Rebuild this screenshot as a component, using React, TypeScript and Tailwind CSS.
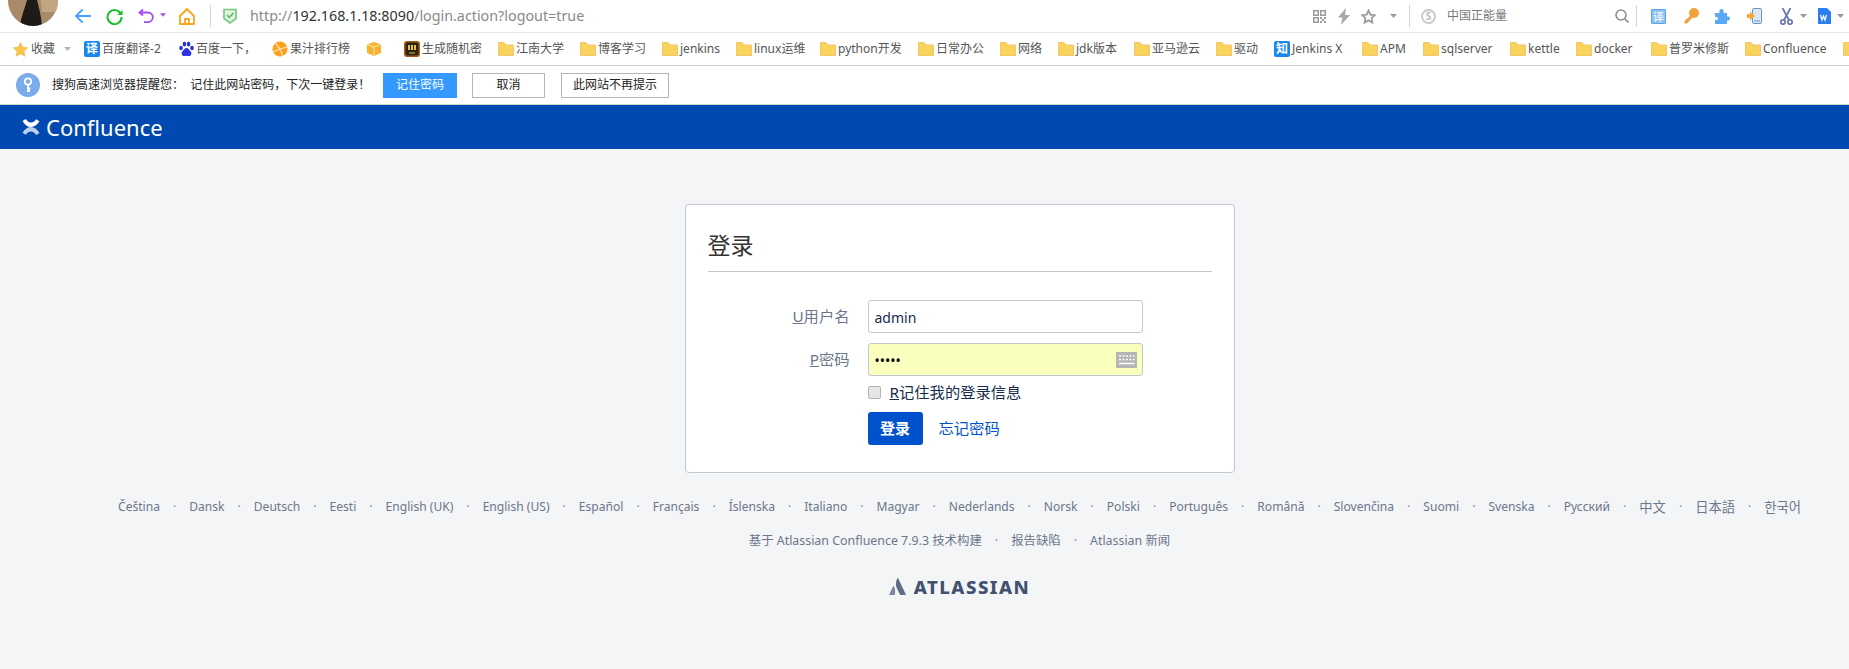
import React from "react";

const CJK = "font-['Noto_Sans','Noto_Sans_CJK_SC',sans-serif]";

function Folder() {
  return (
    <svg width="16" height="14" viewBox="0 0 16 14" className="shrink-0">
      <path d="M.5 13.5V.5h5.5l2 2.5h7.500v10.500z" fill="#f9d45c" stroke="#f6c46a" />
    </svg>
  );
}
function Star() {
  return (
    <svg width="15" height="15" viewBox="0 0 24 24" className="shrink-0">
      <path d="M12 1l3.400 7.300 7.900 1-5.800 5.500 1.500 8L12 18.800 5 22.800l1.500-8L.7 9.300l7.900-1z" fill="#f7c548" stroke="#eeb23a" strokeWidth="1" />
    </svg>
  );
}
function Badge({ ch }: { ch: string }) {
  return (
    <span className="w-4 h-4 shrink-0 rounded-[2px] bg-[#1a86f0] text-white text-[12px] leading-4 text-center font-bold">{ch}</span>
  );
}
function Paw() {
  return (
    <svg width="15" height="16" viewBox="0 0 15 16" className="shrink-0" fill="#2932e1">
      <ellipse cx="2" cy="7" rx="1.800" ry="2.300" />
      <ellipse cx="5.400" cy="3" rx="1.800" ry="2.500" />
      <ellipse cx="9.600" cy="3" rx="1.800" ry="2.500" />
      <ellipse cx="13" cy="7" rx="1.800" ry="2.300" />
      <path d="M7.500 7C5.500 7 5 9 3.500 10.200 2 11.500 2.500 15 5 15c1 0 1.500-.3 2.500-.3S9 15 10 15c2.500 0 3-3.500 1.500-4.800C10 9 9.500 7 7.500 7z" />
    </svg>
  );
}
function Orange() {
  return (
    <svg width="16" height="16" viewBox="0 0 16 16" className="shrink-0">
      <circle cx="8" cy="8" r="7.500" fill="#ffa21a" />
      <path d="M8 8L3 1.500M8 8l7 -2M8 8L1 11M8 8l3 7" stroke="#ffe3bd" strokeWidth="1.300" />
    </svg>
  );
}
function Box() {
  return (
    <svg width="14" height="14" viewBox="0 0 14 14" className="shrink-0">
      <path d="M7 0l7 2.500V11l-7 3-7-3V2.500z" fill="#f5b330" />
      <path d="M0 2.500L7 5l7-2.500M7 5v9" stroke="#fde3ae" strokeWidth="1" fill="none" />
    </svg>
  );
}
function Vault() {
  return (
    <svg width="16" height="16" viewBox="0 0 16 16" className="shrink-0">
      <rect width="16" height="16" rx="3" fill="#a8591a" />
      <rect x="1.500" y="1.500" width="13" height="13" rx="2" fill="#2b2410" />
      <path d="M4 4h2v5H4zM7 4h2v5H7zM10 4h2v5h-2zM5 11.500h6v1H5z" fill="#e4c04a" />
    </svg>
  );
}

type BM = { t: string; i: React.ReactNode; w: string };
const bookmarks: BM[] = [
  { t: "百度翻译-2", i: <Badge ch="译" />, w: "w-[95px]" },
  { t: "百度一下，", i: <Paw />, w: "w-[93px]" },
  { t: "果汁排行榜", i: <Orange />, w: "w-[95px]" },
  { t: "", i: <Box />, w: "w-[37px]" },
  { t: "生成随机密", i: <Vault />, w: "w-[94px]" },
  { t: "江南大学", i: <Folder />, w: "w-[82px]" },
  { t: "博客学习", i: <Folder />, w: "w-[82px]" },
  { t: "jenkins", i: <Folder />, w: "w-[74px]" },
  { t: "linux运维", i: <Folder />, w: "w-[84px]" },
  { t: "python开发", i: <Folder />, w: "w-[98px]" },
  { t: "日常办公", i: <Folder />, w: "w-[82px]" },
  { t: "网络", i: <Folder />, w: "w-[58px]" },
  { t: "jdk版本", i: <Folder />, w: "w-[76px]" },
  { t: "亚马逊云", i: <Folder />, w: "w-[82px]" },
  { t: "驱动", i: <Folder />, w: "w-[58px]" },
  { t: "Jenkins X", i: <Badge ch="知" />, w: "w-[88px]" },
  { t: "APM", i: <Folder />, w: "w-[61px]" },
  { t: "sqlserver", i: <Folder />, w: "w-[87px]" },
  { t: "kettle", i: <Folder />, w: "w-[66px]" },
  { t: "docker", i: <Folder />, w: "w-[75px]" },
  { t: "普罗米修斯", i: <Folder />, w: "w-[94px]" },
  { t: "Confluence", i: <Folder />, w: "w-[98px]" },
  { t: "", i: <Folder />, w: "w-[16px]" },
];

const langs = ["Čeština","Dansk","Deutsch","Eesti","English (UK)","English (US)","Español","Français","Íslenska","Italiano","Magyar","Nederlands","Norsk","Polski","Português","Română","Slovenčina","Suomi","Svenska","Русский","中文","日本語","한국어"];
const wideLangs = ["中文", "日本語", "한국어"];
const links = ["基于 Atlassian Confluence 7.9.3 技术构建","报告缺陷","Atlassian 新闻"];

function Caret({ c = "#9a9a9a", w = 7 }: { c?: string; w?: number }) {
  return (
    <svg width={w} height="4" viewBox="0 0 7 4" className="shrink-0"><path d="M0 0h7L3.500 4z" fill={c} /></svg>
  );
}

function Dots({ items, size }: { items: string[]; size: string }) {
  return (
    <ul className={`flex justify-center items-center gap-[13px] leading-5 text-[#6b778c] ${size}`}>
      {items.map((t, i) => (
        <React.Fragment key={t}>
          {i > 0 && <li className="text-[#7a869a]">·</li>}
          <li className={wideLangs.includes(t) ? "text-[13.3px]" : ""}>{t}</li>
        </React.Fragment>
      ))}
    </ul>
  );
}

export default function App() {
  return (
    <div className={`w-[1849px] h-[669px] overflow-hidden bg-[#f4f5f7] ${CJK}`}>
      {/* browser toolbar */}
      <div className="h-[33px] bg-white border-b border-[#e6e6e6] flex items-center justify-between overflow-hidden">
        <div className="flex items-center">
          <svg width="50" height="50" viewBox="0 0 50 50" className="ml-2 mt-[-30px] shrink-0 rounded-full">
            <rect width="50" height="50" fill="#a88a68" />
            <path d="M30 0h20v36H34z" fill="#c2a684" />
            <path d="M20 20h8c2 8 5 18 6 30H12c1-10 6-20 8-30z" fill="#1e1a18" />
          </svg>
          <svg width="18" height="16" viewBox="0 0 18 16" className="ml-[16px] shrink-0" fill="none" stroke="#4a9ffa" strokeWidth="1.800">
            <path d="M17 8H2M8.500 1.500L2 8l6.500 6.500" />
          </svg>
          <svg width="17" height="17" viewBox="0 0 17 17" className="ml-[14px] shrink-0" fill="none" stroke="#17bf2c" strokeWidth="2">
            <path d="M14.500 5.500A7 7 0 1 0 15.500 9" />
            <path d="M16.500 2v5h-5z" fill="#17bf2c" stroke="none" />
          </svg>
          <svg width="17" height="16" viewBox="0 0 17 16" className="ml-[15px] shrink-0" fill="none" stroke="#a54bf0" strokeWidth="1.800">
            <path d="M5 1.500L1.500 4.500 5 7.500M2 4.500h8a4.800 4.800 0 0 1 0 9.600H6" />
          </svg>
          <span className="ml-[5px] mb-[2px]"><Caret c="#a54bf0" w={6} /></span>
          <svg width="16" height="17" viewBox="0 0 16 17" className="ml-[13px] shrink-0" fill="none" stroke="#ffa31a" strokeWidth="1.800" strokeLinejoin="round">
            <path d="M8 1L1 8v8h14V8zM6 16v-5h4v5" />
          </svg>
          <span className="ml-[15px] w-px h-[22px] bg-[#d4d4d4]" />
          <svg width="14" height="16" viewBox="0 0 14 16" className="ml-[12px] shrink-0" fill="none">
            <path d="M1 1.500h12v9l-6 4.500-6-4.500z" fill="#dff3e1" stroke="#74c87f" strokeWidth="1.600" />
            <path d="M4 7l2.300 2.300L10.500 5" stroke="#59b868" strokeWidth="1.600" />
          </svg>
          <span className="ml-[13px] text-[14.3px] text-[#8a8a8a] whitespace-nowrap">http://<span className="text-[#333]">192.168.1.18:8090</span>/login.action?logout=true</span>
        </div>
        <div className="flex items-center w-[536px] shrink-0">
          <svg width="13" height="13" viewBox="0 0 13 13" className="shrink-0" fill="#9b9b9b">
            <path d="M0 0h6v6H0zM1.500 1.500v3h3v-3zM7 0h6v6H7zM8.500 1.500v3h3v-3zM0 7h6v6H0zM1.500 8.500v3h3v-3zM7 7h2v2H7zM11 7h2v2h-2zM9 9h2v2H9zM7 11h2v2H7zM11 11h2v2h-2z" fillRule="evenodd" />
          </svg>
          <svg width="12" height="17" viewBox="0 0 12 17" className="ml-3 shrink-0" fill="#a6a6a6"><path d="M8 0L0 9.500h4.500L3 17l9-10H7z" /></svg>
          <svg width="15" height="15" viewBox="0 0 24 24" className="ml-[11px] shrink-0" fill="none" stroke="#9b9b9b" strokeWidth="2.800"><path d="M12 2.500l3 6.500 7 .9-5.100 4.800 1.300 7L12 18.200l-6.200 3.500 1.300-7L2 9.900 9 9z" /></svg>
          <span className="ml-[14px]"><Caret /></span>
          <span className="ml-[12px] w-px h-[22px] bg-[#d4d4d4]" />
          <span className="ml-[11px] w-[15px] h-[15px] rounded-full border-2 border-[#c9c9c9] text-[#bdbdbd] text-[10px] leading-[11px] text-center font-bold shrink-0">S</span>
          <span className="ml-[11px] w-[168px] text-[12px] text-[#777] whitespace-nowrap">中国正能量</span>
          <svg width="14" height="14" viewBox="0 0 14 14" className="shrink-0" fill="none" stroke="#8e8e8e" strokeWidth="1.600"><circle cx="6" cy="6" r="5" /><path d="M9.500 9.500L13.500 13.500" /></svg>
          <span className="ml-[7px] w-px h-[22px] bg-[#d4d4d4]" />
          <span className="ml-[14px] w-[15px] h-[15px] rounded-[1px] bg-[#8fc3f2] border border-[#5ea3e6] text-white text-[11px] leading-[13px] text-center shrink-0">译</span>
          <svg width="15" height="16" viewBox="0 0 15 16" className="ml-[18px] shrink-0" fill="#f0a23c"><circle cx="10" cy="5" r="5" /><path d="M7 7l2 2-6 6.500H.5V13z" /></svg>
          <svg width="15" height="15" viewBox="0 0 15 15" className="ml-[16px] shrink-0" fill="#5aa9f5"><path d="M0 4h4.500C4 1 5 0 6.500 0S9 1 8.500 4H12v3.500c2.500-.5 3 1 3 2s-.5 2.500-3 2V15H0v-4c2 .5 3-.5 3-1.500S2 7.500 0 8z" /></svg>
          <svg width="15" height="16" viewBox="0 0 15 16" className="ml-[17px] shrink-0">
            <rect x="5.500" y=".5" width="9" height="15" rx="1.500" fill="#dce8f6" stroke="#6f93c4" />
            <path d="M7 13h6" stroke="#6f93c4" />
            <path d="M0 6h3V3.500L8 8l-5 4.500V10H0z" fill="#f5a93a" />
          </svg>
          <svg width="13" height="17" viewBox="0 0 13 17" className="ml-[18px] shrink-0" fill="none" stroke="#6a78b8" strokeWidth="1.800">
            <circle cx="3" cy="14" r="2.200" /><circle cx="10" cy="14" r="2.200" /><path d="M4 12L10.500 0M9 12L2.500 0" />
          </svg>
          <span className="ml-[7px]"><Caret /></span>
          <svg width="13" height="16" viewBox="0 0 13 16" className="ml-[11px] shrink-0">
            <path d="M0 0h9l4 4v12H0z" fill="#2b7ff0" />
            <path d="M2.500 7l1.500 5 1.500-4 1.500 4 1.500-5" stroke="#fff" strokeWidth="1.200" fill="none" />
          </svg>
          <span className="ml-[6px]"><Caret /></span>
        </div>
      </div>

      {/* bookmarks */}
      <div className="h-[33px] bg-white border-b border-[#cfcfcf] flex items-center pl-[13px] text-[12px] text-[#555] whitespace-nowrap overflow-hidden">
        <Star />
        <span className="ml-[3px]">收藏</span>
        <span className="ml-[9px] w-[20px] shrink-0"><Caret c="#b5b5b5" /></span>
        <div className="flex items-center">
          {bookmarks.map((b, i) => (
            <div key={i} className={`flex items-center gap-[2px] shrink-0 ${b.w}`}>
              {b.i}
              {b.t && <span>{b.t}</span>}
            </div>
          ))}
        </div>
      </div>

      {/* password prompt */}
      <div className="h-[39px] bg-white border-b border-[#d0d0d0] flex items-center text-[12px] text-[#222] whitespace-nowrap">
        <svg width="24" height="24" viewBox="0 0 24 24" className="ml-4 shrink-0">
          <circle cx="12" cy="12" r="12" fill="#7aabea" />
          <circle cx="12" cy="8.500" r="3.200" fill="none" stroke="#fff" strokeWidth="1.800" />
          <path d="M12 11.500V19M12 15.500h2.500M12 18h2" stroke="#fff" strokeWidth="1.800" />
        </svg>
        <span className="ml-3 w-[331px]">搜狗高速浏览器提醒您：&nbsp; 记住此网站密码，下次一键登录！</span>
        <button className="w-[74px] h-[25px] bg-[#3399ff] text-white">记住密码</button>
        <button className="ml-[15px] w-[73px] h-[25px] bg-white border border-[#b5b5b5]">取消</button>
        <button className="ml-[16px] w-[108px] h-[25px] bg-white border border-[#b5b5b5]">此网站不再提示</button>
      </div>

      {/* confluence header */}
      <header className="h-[44px] bg-[#0049b0] flex items-center pl-[22px] text-white">
        <svg width="18" height="16" viewBox="0 0 18 16" className="shrink-0" fill="#fff">
          <path d="M.5 2L3.800 0C5.500 2.500 7 3.500 9 3.500S12.500 2.500 14.200.3L17.500 2.300C15 6 12.500 8 9 8 5.500 8 3 6 .5 2z" />
          <path d="M.5 13.700C3 10 5.500 8 9 8c3.500 0 6 2 8.500 6L14.200 16C12.500 13.500 11 12.500 9 12.500S5.500 13.500 3.800 15.700z" opacity=".75" />
        </svg>
        <span className="ml-[6px] text-[22px] leading-none">Confluence</span>
      </header>

      {/* page */}
      <main className="w-[1919px]">
        <section className="mx-auto mt-[55px] w-[550px] h-[269px] bg-white border border-[#c1c7d0] rounded-[4px] px-[22px] pt-[22px]">
          <h1 className="h-[45px] border-b border-[#c1c7d0] text-[23px] leading-[36px] text-[#333]">登录</h1>
          <form className="mt-[28px] text-[15.3px]">
            <div className="flex items-center gap-[18px]">
              <label className="w-[142px] text-right text-[#6b778c]"><span className="underline">U</span>用户名</label>
              <input readOnly defaultValue="admin" className="w-[275px] h-[33px] px-[6px] pt-[2px] text-[14px] bg-white border border-[#c1c7d0] rounded-[3px] text-[#172b4d]" />
            </div>
            <div className="mt-[10px] flex items-center gap-[18px]">
              <label className="w-[142px] text-right text-[#6b778c]"><span className="underline">P</span>密码</label>
              <div className="relative">
                <input readOnly type="password" defaultValue="admin" className="block w-[275px] h-[33px] px-[6px] pt-[2px] text-[14px] bg-[#faffbd] border border-[#c1c7d0] rounded-[3px] text-black" />
                <svg width="21" height="16" viewBox="0 0 21 16" className="absolute right-[6px] top-[9px]">
                  <rect width="21" height="16" fill="#b5b5b5" />
                  <path d="M3 4h2M6.500 4h2M10 4h2M13.500 4h2M17 4h1.500M3 7.500h2M6.500 7.500h2M10 7.500h2M13.500 7.500h2M17 7.500h1.500M3 11.500h15.500" stroke="#fff" strokeWidth="1.600" />
                </svg>
              </div>
            </div>
            <div className="h-[32px] mb-[4px] ml-[160px] flex items-center gap-[9px]">
              <input type="checkbox" readOnly className="appearance-none w-[13px] h-[13px] rounded-[2px] bg-[#e6e6e6] border border-[#b3b3b3]" />
              <label className="text-[#172b4d]"><span className="underline">R</span>记住我的登录信息</label>
            </div>
            <div className="ml-[160px] flex items-center gap-4">
              <button type="button" className="w-[55px] h-[33px] rounded-[3px] bg-[#0052cc] text-white text-[15px] font-bold">登录</button>
              <a className="text-[#0052cc]">忘记密码</a>
            </div>
          </form>
        </section>
        <footer className="mt-[24px]">
          <Dots items={langs} size="text-[12.09px]" />
          <div className="mt-[14px]"><Dots items={links} size="text-[12.4px]" /></div>
          <div className="mt-[27px] flex items-center justify-center gap-[8px] text-[#42526e]">
            <svg width="17" height="17" viewBox="0 0 17 17" className="shrink-0">
              <path d="M4.800 8.300C4.500 8 4.200 8 4 8.400L0 17h5.600c1-3 .8-6.500-.8-8.700z" fill="#7a869a" />
              <path d="M8.500 0C6.500 3.500 6.300 7 8 10.500L11.200 17H17L9.300.4C9.100 0 8.700 0 8.500 0z" fill="#5e6c84" />
            </svg>
            <span className="text-[18.5px] leading-[17px] font-extrabold tracking-[1.5px]">ATLASSIAN</span>
          </div>
        </footer>
      </main>
    </div>
  );
}
